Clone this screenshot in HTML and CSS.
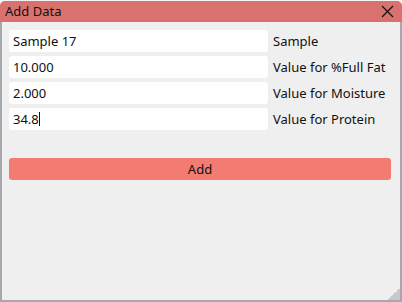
FILE: index.html
```html
<!DOCTYPE html>
<html>
<head>
<meta charset="utf-8">
<link rel="stylesheet" href="styles.css">
</head>
<body>
<div class="window">
  <div class="titlebar">
    <span class="title">Add Data</span>
    <svg class="close" width="13" height="13" viewBox="0 0 13 13"><path d="M1 1 L12 12 M12 1 L1 12" stroke="#111" stroke-width="1.2" fill="none"/></svg>
  </div>
  <div class="content">
    <div class="form">
      <div class="field">Sample 17</div><div class="label">Sample</div>
      <div class="field">10.000</div><div class="label">Value for %Full Fat</div>
      <div class="field">2.000</div><div class="label">Value for Moisture</div>
      <div class="field">34.8<span class="caret"></span></div><div class="label">Value for Protein</div>
    </div>
    <div class="btn">Add</div>
  </div>
  <div class="grip"></div>
</div>
</body>
</html>
```
FILE: styles.css
```css
html, body { margin: 0; padding: 0; }
body { width: 402px; height: 302px; background: #f4f4f6; font-family: "Noto Sans", sans-serif; color: #111; overflow: hidden; }
.window { box-sizing: border-box; width: 402px; height: 301px; margin-top: 1px; border: 2px solid #a7a7ae; border-top: none; border-radius: 6px 6px 0 0; background: #efefef; position: relative; display: flex; flex-direction: column; }
.titlebar { height: 21px; background: #d9716f; border-radius: 5px 5px 0 0; display: flex; align-items: center; justify-content: space-between; padding: 0 8px 0 5px; margin: 0 -2px; }
.title { font-size: 13px; line-height: 21px; }
.close { display: block; }
.content { padding: 8px 9px 0 7px; display: flex; flex-direction: column; }
.form { display: grid; grid-template-columns: 259px auto; column-gap: 5px; row-gap: 4px; }
.field { background: #fff; height: 22px; border-radius: 3px; font-size: 13px; line-height: 22px; padding-left: 4px; display: flex; align-items: center; }
.caret { display: inline-block; width: 1px; height: 14px; background: #111; }
.label { font-size: 13px; line-height: 22px; }
.btn { margin-top: 28px; height: 22px; background: #f27b72; border-radius: 3px; text-align: center; font-size: 13px; line-height: 22px; }
.grip { position: absolute; right: 0; bottom: 0; width: 12px; height: 12px; background: linear-gradient(135deg, transparent 50%, #c8c8cc 50%); }
```
